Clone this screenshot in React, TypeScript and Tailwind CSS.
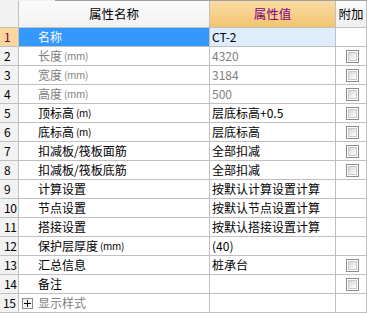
import React from "react";

type Row = {
  name: React.ReactNode;
  value: string;
  check: boolean;
  dim?: boolean;
};

const U = ({ t }: { t: string }) => (
  <span className="text-[10px] tracking-[-0.3px] ml-[2px]">{t}</span>
);

const rows: Row[] = [
  { name: "名称", value: "CT-2", check: false },
  { name: <>长度<U t="(mm)" /></>, value: "4320", check: true, dim: true },
  { name: <>宽度<U t="(mm)" /></>, value: "3184", check: true, dim: true },
  { name: <>高度<U t="(mm)" /></>, value: "500", check: true, dim: true },
  { name: <>顶标高<U t="(m)" /></>, value: "层底标高+0.5", check: true },
  { name: <>底标高<U t="(m)" /></>, value: "层底标高", check: true },
  { name: "扣减板/筏板面筋", value: "全部扣减", check: true },
  { name: "扣减板/筏板底筋", value: "全部扣减", check: true },
  { name: "计算设置", value: "按默认计算设置计算", check: false },
  { name: "节点设置", value: "按默认节点设置计算", check: false },
  { name: "搭接设置", value: "按默认搭接设置计算", check: false },
  { name: <>保护层厚度<U t="(mm)" /></>, value: "(40)", check: false },
  { name: "汇总信息", value: "桩承台", check: true },
  { name: "备注", value: "", check: true },
];

const Check = () => (
  <div className="w-[13px] h-[13px] border border-[#8c8c8c] p-px bg-white">
    <div className="w-full h-full bg-gradient-to-br from-[#d4d4d4] via-[#ececec] to-[#ffffff] border border-[#c8c8c8]" />
  </div>
);

const font = { fontFamily: '"Noto Sans CJK SC", "Noto Sans", sans-serif' };

export default function App() {
  return (
    <div className="w-[367px] h-[317px] bg-white text-[12px] leading-none text-black" style={font}>
      <div className="flex h-px">
        <div className="w-[55px] bg-[#f0f0f0]" />
        <div className="flex-1 bg-[#a0a0a0]" />
      </div>
      <div className="grid grid-cols-[19px_191px_126px_31px]">
        {/* header */}
        <div className="h-[27px] bg-[#f2f2f2] border-r border-b border-[#c0c0c0]" />
        <div className="h-[27px] bg-gradient-to-b from-[#fbfbfb] to-[#f2f2f2] border-r border-b border-[#c0c0c0] flex items-center justify-center text-[12.5px]">
          属性名称
        </div>
        <div className="h-[27px] bg-gradient-to-b from-[#fadca4] to-[#f2c46e] border-r border-b border-[#c0c0c0] flex items-center justify-center text-[12.5px] text-[#800080]">
          属性值
        </div>
        <div className="h-[27px] bg-gradient-to-b from-[#fbfbfb] to-[#efefef] border-r border-b border-[#c0c0c0] flex items-center justify-center text-[12.5px]">
          附加
        </div>

        {rows.map((r, i) => {
          const sel = i === 0;
          return (
            <React.Fragment key={i}>
              <div
                className={`h-[19px] border-r border-b border-[#c0c0c0] flex items-center pl-[4px] ${
                  sel ? "bg-[#fdd79a] text-[#6a0050]" : "bg-[#f2f2f2]"
                } ${i >= 9 ? "pl-[3px] tracking-[-0.5px]" : ""}`}
              >
                {i + 1}
              </div>
              <div
                className={`h-[19px] border-r border-b border-[#c0c0c0] flex items-center pl-[19px] ${
                  sel ? "bg-[#3399ff] text-white" : r.dim ? "text-[#808080]" : ""
                }`}
              >
                {r.name}
              </div>
              <div
                className={`h-[19px] border-r border-b border-[#c0c0c0] flex items-center pl-[2px] ${
                  sel ? "bg-[#deedfc]" : ""
                } ${r.dim ? "text-[#808080]" : ""}`}
              >
                {r.value}
              </div>
              <div className="h-[19px] border-r border-b border-[#c0c0c0] flex items-center justify-center pl-[2px]">
                {r.check ? <Check /> : null}
              </div>
            </React.Fragment>
          );
        })}

        {/* row 15 */}
        <div className="h-[19px] border-r border-b border-[#c0c0c0] flex items-center pl-[3px] bg-[#f2f2f2] tracking-[-0.5px]">
          15
        </div>
        <div className="h-[19px] border-r border-b border-[#c0c0c0] flex items-center pl-[3px] text-[#808080]">
          <div className="w-[11px] h-[11px] border border-[#8c8c8c] bg-gradient-to-br from-[#e8e8e8] to-white flex items-center justify-center mr-[5px]">
            <svg width="7" height="7" viewBox="0 0 7 7">
              <rect x="0" y="3" width="7" height="1" fill="#000" />
              <rect x="3" y="0" width="1" height="7" fill="#000" />
            </svg>
          </div>
          显示样式
        </div>
        <div className="h-[19px] border-r border-b border-[#c0c0c0]" />
        <div className="h-[19px] border-r border-b border-[#c0c0c0]" />
      </div>
    </div>
  );
}
